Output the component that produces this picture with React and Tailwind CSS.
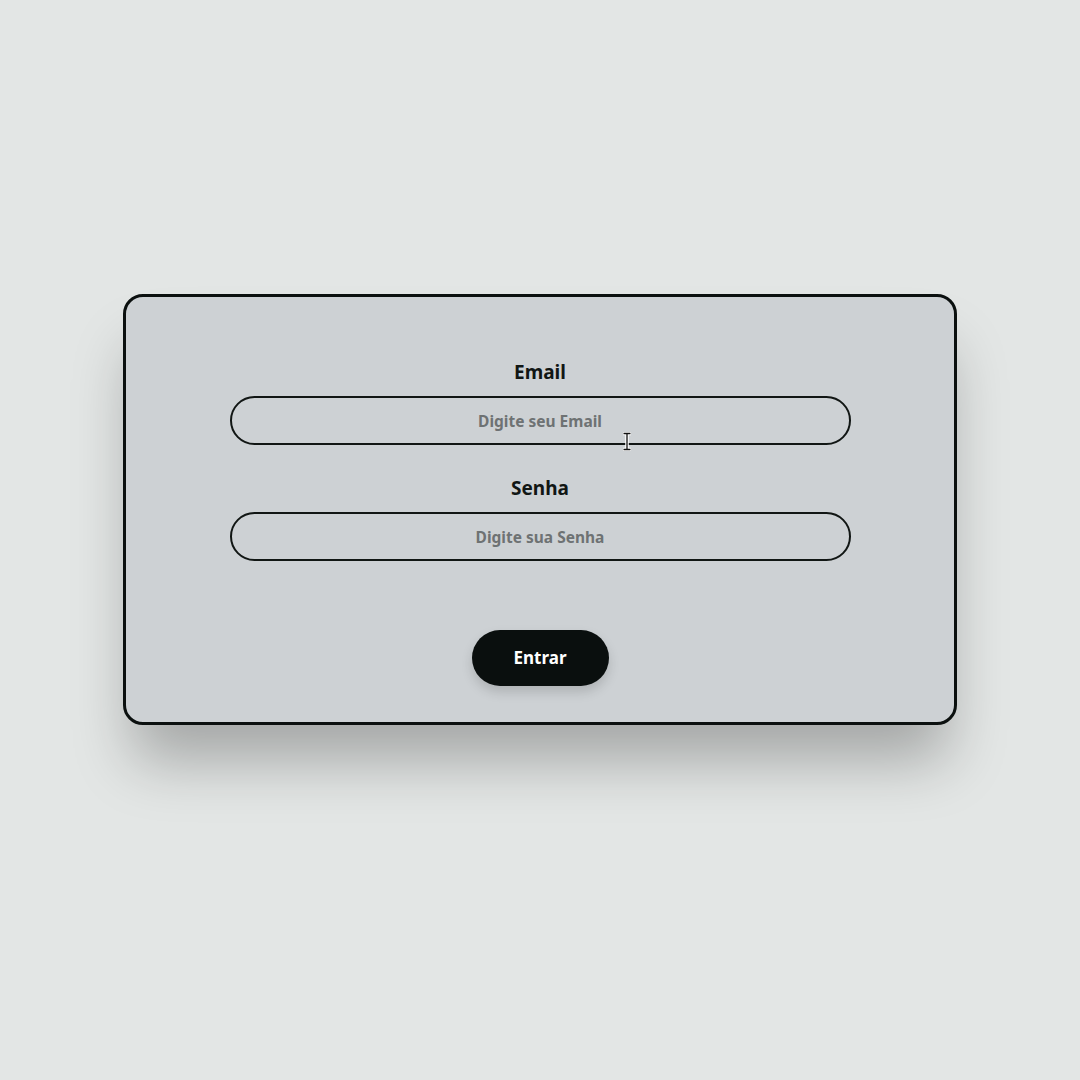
export default function App() {
    return (
        <div className="relative min-h-screen w-full flex items-center justify-center bg-[#e3e6e5] font-['Noto_Sans',sans-serif]">
            <div className="w-[834px] h-[431px] -mt-[61px] rounded-[20px] border-[3px] border-[#0b100f] bg-[#cdd1d4] shadow-[0_45px_60px_-10px_rgba(0,0,0,0.28)] flex flex-col items-center pt-[63px]">
                <label className="text-[19px] leading-[24px] font-bold text-[#111614]">Email</label>
                <input
                    type="text"
                    placeholder="Digite seu Email"
                    className="mt-[12px] w-[621px] h-[49px] rounded-full border-2 border-[#111614] bg-transparent text-center text-[15.5px] font-bold placeholder:text-[#6e7273] outline-none"
                />
                <label className="mt-[31px] text-[19px] leading-[24px] font-bold text-[#111614]">Senha</label>
                <input
                    type="password"
                    placeholder="Digite sua Senha"
                    className="mt-[12px] w-[621px] h-[49px] rounded-full border-2 border-[#111614] bg-transparent text-center text-[15.5px] font-bold placeholder:text-[#6e7273] outline-none"
                />
                <button className="mt-[69px] w-[137px] h-[56px] rounded-full bg-[#0a0f0e] text-white text-[17px] font-bold shadow-[0_6px_12px_rgba(0,0,0,0.15)]">
                    Entrar
                </button>
            </div>
            {/* text cursor */}
            <svg className="absolute left-[622px] top-[432px]" width="10" height="19" viewBox="0 0 10 19">
                <path d="M1 1.5h8M1 17.5h8M5 1.5v16" stroke="#fff" strokeWidth="3.5" fill="none" />
                <path d="M1.5 1.5h7M1.5 17.5h7M5 1.5v16" stroke="#111" strokeWidth="1.3" fill="none" />
            </svg>
        </div>
    )
}
